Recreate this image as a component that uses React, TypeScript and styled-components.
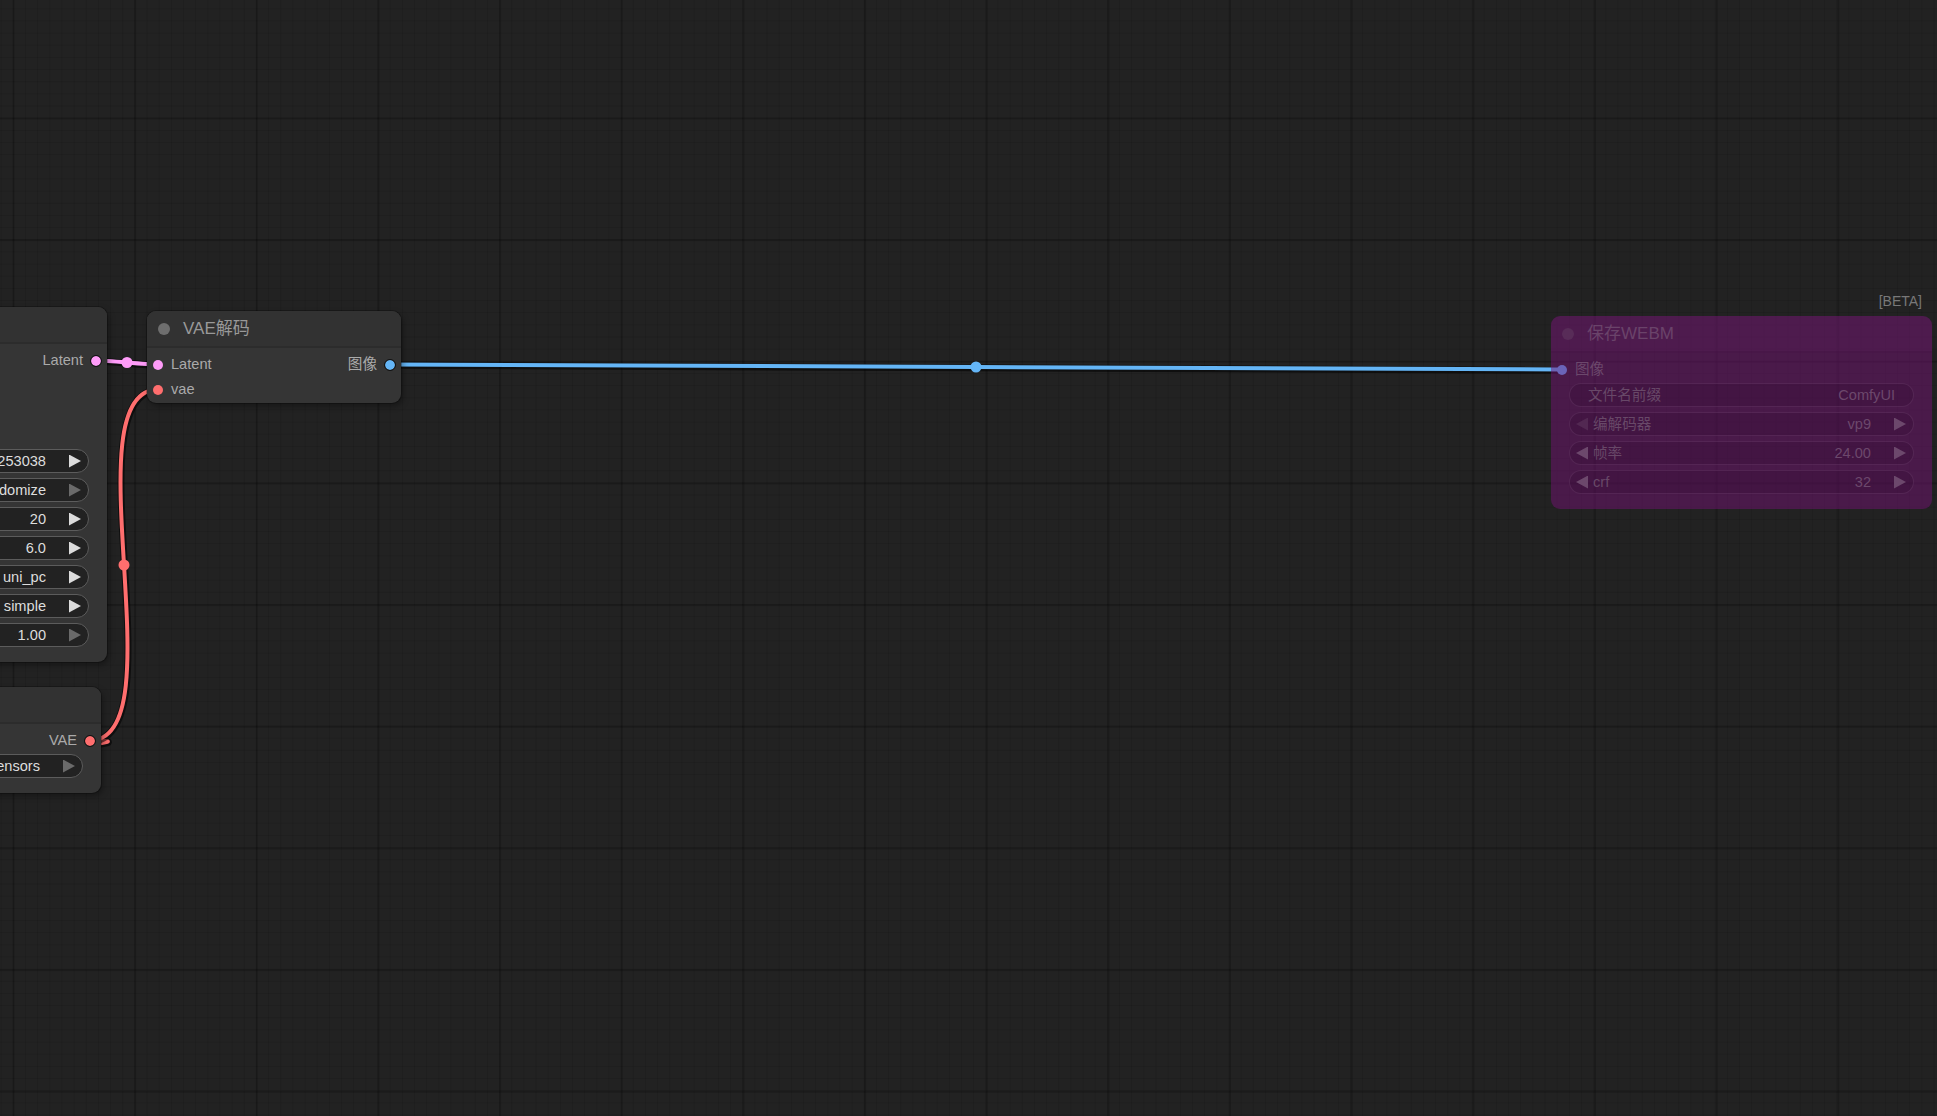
import React from 'react';
import styled, { createGlobalStyle } from 'styled-components';

const FONT = `"Liberation Sans", Arial, "Noto Sans CJK SC", sans-serif`;

const GlobalStyle = createGlobalStyle`
  html, body {
    margin: 0;
    padding: 0;
    background: #222;
    overflow: hidden;
  }
  body {
    font-family: ${FONT};
  }
`;

const colors = {
    latent: '#FF9CF9',
    vae: '#FF6E6E',
    image: '#64B5F6',
};

type Tone = 'normal' | 'bypass';

const Canvas = styled.div`
    position: relative;
    width: 1937px;
    height: 1116px;
    overflow: hidden;
    background-color: #222;
    background-image:
        linear-gradient(to right, rgba(0, 0, 0, 0.2) 2px, transparent 2px),
        linear-gradient(to bottom, rgba(0, 0, 0, 0.2) 2px, transparent 2px),
        linear-gradient(to right, rgba(0, 0, 0, 0.1) 1px, transparent 1px),
        linear-gradient(to bottom, rgba(0, 0, 0, 0.1) 1px, transparent 1px);
    background-size: 121.67px 121.67px, 121.67px 121.67px, 12.167px 12.167px, 12.167px 12.167px;
    background-position: 12.5px 0, 0 117.5px, 0.7px 0, 0 8.3px;
`

const LinkLayer = styled.svg`
    position: absolute;
    left: 0;
    top: 0;
    pointer-events: none;
`

const Node = styled.div<{ $x: number; $y: number; $w: number; $tone?: Tone; $pad?: number }>`
    position: absolute;
    left: ${p => p.$x}px;
    top: ${p => p.$y}px;
    width: ${p => p.$w}px;
    display: flex;
    flex-direction: column;
    padding-bottom: ${p => p.$pad ?? 15}px;
    border-radius: 9px;
    background: ${p => p.$tone === 'bypass' ? 'rgba(114, 18, 114, 0.5)' : '#353535'};
    box-shadow: ${p => p.$tone === 'bypass' ? 'none' : '0 0 0 1px rgba(0, 0, 0, 0.25), 2px 3px 6px rgba(0, 0, 0, 0.35)'};
    font-family: ${FONT};
`

const TitleBar = styled.div<{ $tone?: Tone }>`
    height: 35px;
    display: flex;
    align-items: center;
    gap: 13px;
    padding-left: 11px;
    border-radius: 9px 9px 0 0;
    background: ${p => p.$tone === 'bypass' ? 'rgba(110, 40, 110, 0.12)' : '#323232'};
    border-bottom: 2px solid ${p => p.$tone === 'bypass' ? 'rgba(60, 10, 60, 0.25)' : '#2c2c2c'};
`

const TitleDot = styled.span<{ $tone?: Tone }>`
    flex: none;
    width: 12px;
    height: 12px;
    border-radius: 50%;
    background: ${p => p.$tone === 'bypass' ? '#582c58' : '#6e6e6e'};
`

const TitleText = styled.span<{ $tone?: Tone }>`
    font-size: 17px;
    line-height: 20px;
    color: ${p => p.$tone === 'bypass' ? '#6a436a' : '#999'};
    white-space: nowrap;
`

const Badge = styled.span`
    position: absolute;
    top: -23px;
    right: 10px;
    font-size: 14px;
    color: #787878;
`

const Body = styled.div`
    display: flex;
    flex-direction: column;
    padding-top: 4px;
`

const SlotRow = styled.div`
    height: 25px;
    display: flex;
    align-items: center;
    justify-content: space-between;
`

const Slot = styled.div<{ $side: 'in' | 'out'; $tone?: Tone }>`
    display: flex;
    align-items: center;
    flex-direction: ${p => p.$side === 'in' ? 'row' : 'row-reverse'};
    gap: 7px;
    padding: ${p => p.$side === 'in' ? '0 0 0 5px' : '0 5px 0 0'};
    font-size: 14.6px;
    line-height: 17px;
    color: ${p => p.$tone === 'bypass' ? '#6c486c' : '#aaa'};
    white-space: nowrap;
`

const Dot = styled.span<{ $color: string; $ring?: boolean }>`
    flex: none;
    width: 12px;
    height: 12px;
    box-sizing: border-box;
    border-radius: 50%;
    background: ${p => p.$color};
    border: ${p => p.$ring ? '1.5px solid #111' : '1px solid transparent'};
    background-clip: padding-box;
`

const Widgets = styled.div`
    display: flex;
    flex-direction: column;
    gap: 5px;
    margin-top: 1px;
`

const Widget = styled.div<{ $tone?: Tone; $text?: boolean }>`
    height: 24px;
    margin: 0 18px;
    box-sizing: border-box;
    display: flex;
    align-items: center;
    padding: ${p => p.$text ? '0 18px' : '0 7px 0 6px'};
    border-radius: 12px;
    background: ${p => p.$tone === 'bypass' ? 'rgba(30, 0, 30, 0.16)' : '#222'};
    border: 1px solid ${p => p.$tone === 'bypass' ? 'rgba(130, 80, 130, 0.28)' : '#5c5c5c'};
    font-size: 14.6px;
    line-height: 17px;
    white-space: nowrap;
`

const WidgetLabel = styled.span<{ $tone?: Tone; $text?: boolean }>`
    margin-left: ${p => p.$text ? 0 : 5}px;
    color: ${p => p.$tone === 'bypass' ? '#684868' : '#999'};
`

const WidgetValue = styled.span<{ $tone?: Tone; $text?: boolean }>`
    margin-left: auto;
    margin-right: ${p => p.$text ? 0 : 23}px;
    color: ${p => p.$tone === 'bypass' ? '#6c486c' : '#ddd'};
`

const Arrow = styled.span<{ $dir: 'left' | 'right'; $color: string }>`
    flex: none;
    width: 12px;
    height: 13px;
    background: ${p => p.$color};
    clip-path: ${p => p.$dir === 'right'
        ? 'polygon(0 0, 100% 50%, 0 100%)'
        : 'polygon(100% 0, 0 50%, 100% 100%)'};
`

type WidgetData = {
    label?: string;
    value: string;
    left?: string;
    right?: string;
    text?: boolean;
};

const arrowOn = '#dcdcdc';
const arrowOff = '#6a6a6a';

const WidgetRow = ({ w, tone }: { w: WidgetData; tone?: Tone }) => {
    if (w.text) {
        return (
            <Widget $tone={tone} $text>
                <WidgetLabel $tone={tone} $text>{w.label}</WidgetLabel>
                <WidgetValue $tone={tone} $text>{w.value}</WidgetValue>
            </Widget>
        );
    }
    return (
        <Widget $tone={tone}>
            <Arrow $dir="left" $color={w.left ?? arrowOn}/>
            {w.label && <WidgetLabel $tone={tone}>{w.label}</WidgetLabel>}
            <WidgetValue $tone={tone}>{w.value}</WidgetValue>
            <Arrow $dir="right" $color={w.right ?? arrowOn}/>
        </Widget>
    );
};

// the sampler sits mostly off the left edge: only the tail of each value shows
const ksamplerWidgets: WidgetData[] = [
    { value: '970253038' },
    { value: 'randomize', right: arrowOff },
    { value: '20' },
    { value: '6.0' },
    { value: 'uni_pc' },
    { value: 'simple' },
    { value: '1.00', right: arrowOff },
];

const webmWidgets: WidgetData[] = [
    { label: '文件名前缀', value: 'ComfyUI', text: true },
    { label: '编解码器', value: 'vp9', left: '#522852', right: '#6c486c' },
    { label: '帧率', value: '24.00', left: '#6c486c', right: '#6c486c' },
    { label: 'crf', value: '32', left: '#6c486c', right: '#6c486c' },
];

type LinkData = { x1: number; y1: number; x2: number; y2: number; color: string; mid?: boolean };

const links: LinkData[] = [
    { x1: 96, y1: 360.5, x2: 158, y2: 364.5, color: colors.latent, mid: true },
    { x1: 90, y1: 740.5, x2: -540, y2: 800, color: colors.vae },
    { x1: 90, y1: 740.5, x2: 158, y2: 389.5, color: colors.vae, mid: true },
    { x1: 390, y1: 364.5, x2: 1562, y2: 369.5, color: colors.image, mid: true },
];

const Links = () => (
    <LinkLayer width={1937} height={1116} viewBox="0 0 1937 1116">
        {links.map((l, i) => {
            const off = Math.hypot(l.x2 - l.x1, l.y2 - l.y1) * 0.25;
            const d = `M${l.x1} ${l.y1} C${l.x1 + off} ${l.y1} ${l.x2 - off} ${l.y2} ${l.x2} ${l.y2}`;
            return (
                <g key={i}>
                    <path d={d} fill="none" stroke="rgba(0,0,0,0.55)" strokeWidth={7} transform="translate(0.5 0.8)"/>
                    <path d={d} fill="none" stroke={l.color} strokeWidth={4}/>
                    {l.mid && (
                        <circle cx={(l.x1 + l.x2) / 2} cy={(l.y1 + l.y2) / 2} r={5.5} fill={l.color}/>
                    )}
                </g>
            );
        })}
    </LinkLayer>
);

const App = () => {
    return (
        <>
            <GlobalStyle/>
            <Canvas>
                <Links/>

                <Node $x={-233} $y={307} $w={340}>
                    <TitleBar>
                        <TitleDot/>
                    </TitleBar>
                    <Body>
                        <SlotRow>
                            <Slot $side="in"><Dot $color="#B39DDB"/></Slot>
                            <Slot $side="out"><Dot $color={colors.latent} $ring/>Latent</Slot>
                        </SlotRow>
                        <SlotRow><Slot $side="in"><Dot $color="#FFA931"/></Slot></SlotRow>
                        <SlotRow><Slot $side="in"><Dot $color="#FFA931"/></Slot></SlotRow>
                        <SlotRow><Slot $side="in"><Dot $color={colors.latent}/></Slot></SlotRow>
                        <Widgets>
                            {ksamplerWidgets.map((w, i) => <WidgetRow key={i} w={w}/>)}
                        </Widgets>
                    </Body>
                </Node>

                <Node $x={147} $y={311} $w={254} $pad={1}>
                    <TitleBar>
                        <TitleDot/>
                        <TitleText>VAE解码</TitleText>
                    </TitleBar>
                    <Body>
                        <SlotRow>
                            <Slot $side="in"><Dot $color={colors.latent}/>Latent</Slot>
                            <Slot $side="out"><Dot $color={colors.image} $ring/>图像</Slot>
                        </SlotRow>
                        <SlotRow>
                            <Slot $side="in"><Dot $color={colors.vae}/>vae</Slot>
                        </SlotRow>
                    </Body>
                </Node>

                <Node $x={-300} $y={687} $w={401}>
                    <TitleBar>
                        <TitleDot/>
                    </TitleBar>
                    <Body>
                        <SlotRow>
                            <span/>
                            <Slot $side="out"><Dot $color={colors.vae} $ring/>VAE</Slot>
                        </SlotRow>
                        <Widgets>
                            <WidgetRow w={{ value: 'wan_2.1_vae.safetensors', right: arrowOff, left: arrowOff }}/>
                        </Widgets>
                    </Body>
                </Node>

                <Node $x={1551} $y={316} $w={381} $tone="bypass" $pad={15}>
                    <Badge>[BETA]</Badge>
                    <TitleBar $tone="bypass">
                        <TitleDot $tone="bypass"/>
                        <TitleText $tone="bypass">保存WEBM</TitleText>
                    </TitleBar>
                    <Body>
                        <SlotRow>
                            <Slot $side="in" $tone="bypass"><Dot $color="#6a64b8"/>图像</Slot>
                        </SlotRow>
                        <Widgets>
                            {webmWidgets.map(w => <WidgetRow key={w.label} w={w} tone="bypass"/>)}
                        </Widgets>
                    </Body>
                </Node>
            </Canvas>
        </>
    );
};

export default App;
